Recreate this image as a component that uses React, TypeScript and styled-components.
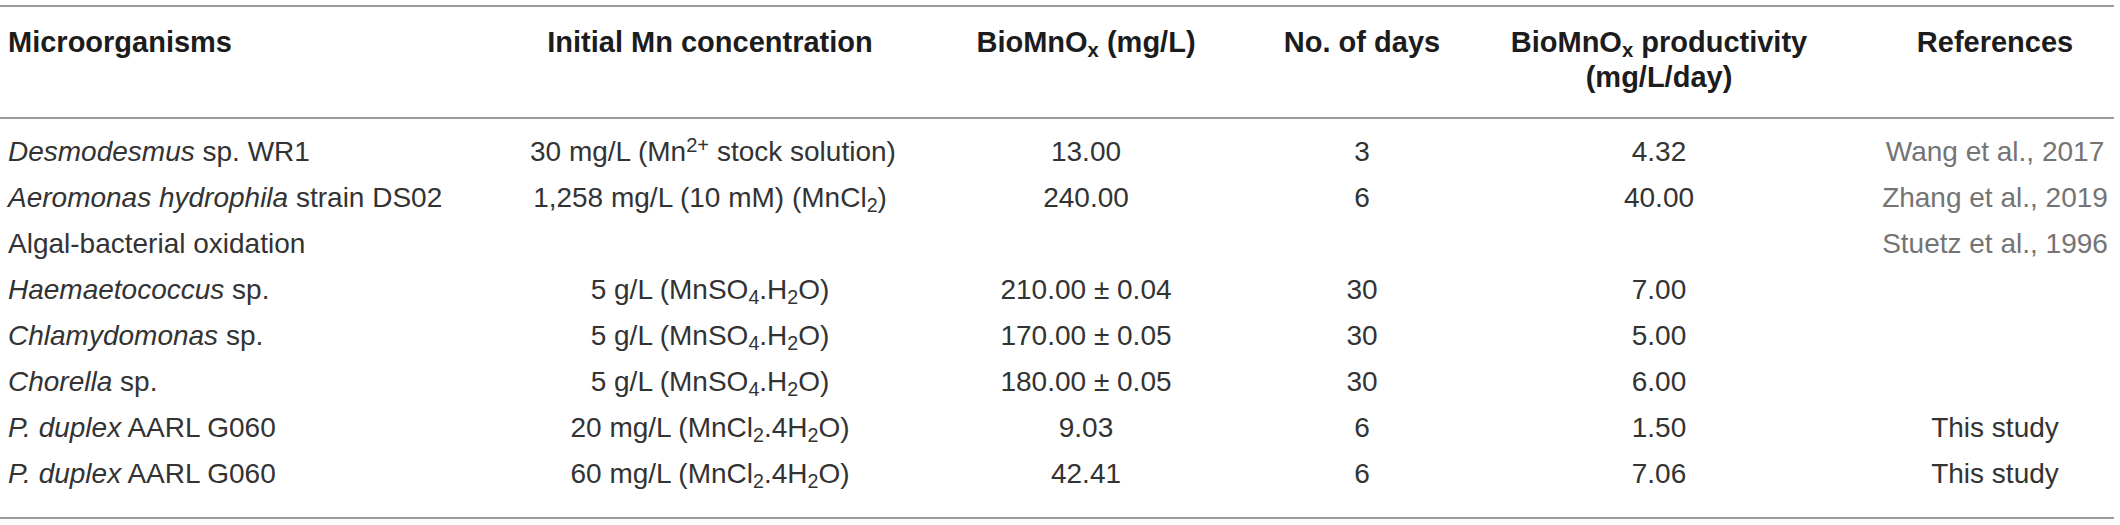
import React from "react";
import styled, { createGlobalStyle } from "styled-components";

const GlobalStyle = createGlobalStyle`
  html, body {
    margin: 0;
    padding: 0;
    background: #ffffff;
  }
  body {
    font-family: "Liberation Sans", Arial, Helvetica, sans-serif;
  }
`;

const Page = styled.div`
  padding-top: 5px;
  width: 2120px;
`;

const Table = styled.table`
  width: 2114px;
  table-layout: fixed;
  border-collapse: collapse;
  border-top: 2px solid #9a9a9a;
  border-bottom: 2px solid #9a9a9a;
  font-family: "Liberation Sans", Arial, Helvetica, sans-serif;
`;

const Col = styled.col<{ $w: number }>`
  width: ${(p) => p.$w}px;
`;

const HeadRow = styled.tr`
  border-bottom: 2px solid #9a9a9a;
`;

const Th = styled.th<{ $left?: boolean }>`
  padding: 18px 0 22px ${(p) => (p.$left ? "8px" : "0")};
  font-size: 29px;
  font-weight: 700;
  line-height: 35px;
  color: #1c1c1c;
  text-align: ${(p) => (p.$left ? "left" : "center")};
  vertical-align: top;
  white-space: nowrap;
`;

const Row = styled.tr<{ $first?: boolean; $last?: boolean }>`
  & > td {
    padding-top: ${(p) => (p.$first ? "14.5px" : "5.5px")};
    padding-bottom: ${(p) => (p.$last ? "26.5px" : "5.5px")};
  }
`;

const Td = styled.td<{ $left?: boolean; $tone?: "link" }>`
  padding-left: ${(p) => (p.$left ? "8px" : "0")};
  padding-right: 0;
  font-size: 28px;
  font-weight: 400;
  line-height: 35px;
  color: ${(p) => (p.$tone === "link" ? "#747474" : "#333333")};
  text-align: ${(p) => (p.$left ? "left" : "center")};
  white-space: nowrap;
  vertical-align: top;
`;

const Em = styled.i`
  font-style: italic;
`;

const Sub = styled.sub`
  font-size: 0.7em;
  line-height: 0;
  vertical-align: -0.25em;
`;

const Sup = styled.sup`
  font-size: 0.72em;
  line-height: 0;
  vertical-align: 0.45em;
`;

type Cell = React.ReactNode;
type DataRow = {
  org: Cell;
  init: Cell;
  bio: Cell;
  days: Cell;
  prod: Cell;
  ref: Cell;
  refLink?: boolean;
};

const MnSO4 = (
  <>
    5 g/L (MnSO<Sub>4</Sub>.H<Sub>2</Sub>O)
  </>
);

const rows: DataRow[] = [
  {
    org: (
      <>
        <Em>Desmodesmus</Em> sp. WR1
      </>
    ),
    init: (
      <>
        30 mg/L (Mn<Sup>2+</Sup> stock solution)
      </>
    ),
    bio: "13.00",
    days: "3",
    prod: "4.32",
    ref: "Wang et al., 2017",
    refLink: true,
  },
  {
    org: (
      <>
        <Em>Aeromonas hydrophila</Em> strain DS02
      </>
    ),
    init: (
      <>
        1,258 mg/L (10 mM) (MnCl<Sub>2</Sub>)
      </>
    ),
    bio: "240.00",
    days: "6",
    prod: "40.00",
    ref: "Zhang et al., 2019",
    refLink: true,
  },
  {
    org: "Algal-bacterial oxidation",
    init: "",
    bio: "",
    days: "",
    prod: "",
    ref: "Stuetz et al., 1996",
    refLink: true,
  },
  {
    org: (
      <>
        <Em>Haemaetococcus</Em> sp.
      </>
    ),
    init: MnSO4,
    bio: "210.00 ± 0.04",
    days: "30",
    prod: "7.00",
    ref: "",
  },
  {
    org: (
      <>
        <Em>Chlamydomonas</Em> sp.
      </>
    ),
    init: MnSO4,
    bio: "170.00 ± 0.05",
    days: "30",
    prod: "5.00",
    ref: "",
  },
  {
    org: (
      <>
        <Em>Chorella</Em> sp.
      </>
    ),
    init: MnSO4,
    bio: "180.00 ± 0.05",
    days: "30",
    prod: "6.00",
    ref: "",
  },
  {
    org: (
      <>
        <Em>P. duplex</Em> AARL G060
      </>
    ),
    init: (
      <>
        20 mg/L (MnCl<Sub>2</Sub>.4H<Sub>2</Sub>O)
      </>
    ),
    bio: "9.03",
    days: "6",
    prod: "1.50",
    ref: "This study",
  },
  {
    org: (
      <>
        <Em>P. duplex</Em> AARL G060
      </>
    ),
    init: (
      <>
        60 mg/L (MnCl<Sub>2</Sub>.4H<Sub>2</Sub>O)
      </>
    ),
    bio: "42.41",
    days: "6",
    prod: "7.06",
    ref: "This study",
  },
];

export default function App() {
  return (
    <>
      <GlobalStyle />
      <Page>
        <Table>
          <colgroup>
            <Col $w={530} />
            <Col $w={360} />
            <Col $w={392} />
            <Col $w={160} />
            <Col $w={434} />
            <Col $w={238} />
          </colgroup>
          <thead>
            <HeadRow>
              <Th $left>Microorganisms</Th>
              <Th>Initial Mn concentration</Th>
              <Th>
                BioMnO<Sub>x</Sub> (mg/L)
              </Th>
              <Th>No. of days</Th>
              <Th>
                BioMnO<Sub>x</Sub> productivity
                <br />
                (mg/L/day)
              </Th>
              <Th>References</Th>
            </HeadRow>
          </thead>
          <tbody>
            {rows.map((r, i) => (
              <Row key={i} $first={i === 0} $last={i === rows.length - 1}>
                <Td $left>{r.org}</Td>
                <Td>{r.init}</Td>
                <Td>{r.bio}</Td>
                <Td>{r.days}</Td>
                <Td>{r.prod}</Td>
                <Td $tone={r.refLink ? "link" : undefined}>{r.ref}</Td>
              </Row>
            ))}
          </tbody>
        </Table>
      </Page>
    </>
  );
}
